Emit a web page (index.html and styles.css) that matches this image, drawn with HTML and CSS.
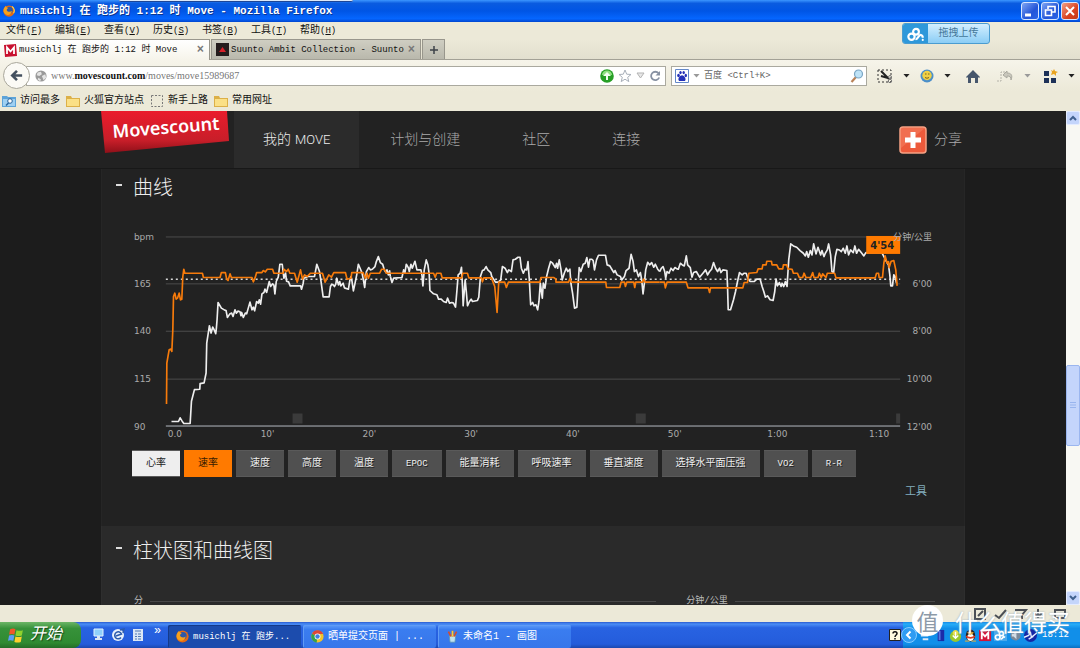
FILE: index.html
```html
<!DOCTYPE html>
<html lang="zh-CN">
<head>
<meta charset="utf-8">
<title>musichlj 在 跑步的 1:12 时 Move</title>
<link rel="stylesheet" href="styles.css">
</head>
<body>
<div class="desktop">
  <header class="titlebar">
    <svg class="ico12" viewBox="0 0 16 16"><circle cx="8" cy="8" r="7.500" fill="#e66a12"/><circle cx="8.500" cy="7" r="4.600" fill="#2d58a8"/><path d="M1 5c1-2 2-3 3-4 0 2 1 2 3 3-1 1-2 1-2 3 1 2 4 3 7 1-1 4-4 6-7 5C1 12 0 8 1 5z" fill="#f9a11b"/><path d="M12 2c3 2 4 6 2 9" stroke="#ffd24a" stroke-width="1.500" fill="none"/></svg>
    <h1 class="window-title">musichlj 在 跑步的 1:12 时 Move - Mozilla Firefox</h1>
    <div class="window-buttons">
      <button class="wbtn" aria-label="最小化"><svg viewBox="0 0 16 16"><path d="M3 12h6" stroke="#fff" stroke-width="3"/></svg></button>
      <button class="wbtn" aria-label="还原"><svg viewBox="0 0 16 16"><path d="M6 6V3.500h7V9h-3M3.500 7h6v5.500h-6z" fill="none" stroke="#fff" stroke-width="1.600"/></svg></button>
      <button class="wbtn close" aria-label="关闭"><svg viewBox="0 0 16 16"><path d="M4 4l8 8M12 4l-8 8" stroke="#fff" stroke-width="2"/></svg></button>
    </div>
    <i class="docked-edge"></i>
  </header>

  <nav class="menubar">
    <button>文件<span class="lat">(<u>F</u>)</span></button><button>编辑<span class="lat">(<u>E</u>)</span></button><button>查看<span class="lat">(<u>V</u>)</span></button><button>历史<span class="lat">(<u>S</u>)</span></button><button>书签<span class="lat">(<u>B</u>)</span></button><button>工具<span class="lat">(<u>T</u>)</span></button><button>帮助<span class="lat">(<u>H</u>)</span></button>
    <button class="upload"><span class="upload-logo"><svg viewBox="0 0 20 16"><g fill="none" stroke="#fff" stroke-width="2.400"><circle cx="5" cy="10.500" r="3.500"/><circle cx="10" cy="5" r="3.200"/><path d="M9.500 13c3 1 3-5 6-4.500 1.500.3 2 1.500 2 3"/></g><circle cx="17.500" cy="14" r="1.200" fill="#fff"/></svg></span><span class="upload-text">拖拽上传</span></button>
  </nav>

  <div class="tabs">
    <button class="tab active"><svg class="ico13" viewBox="0 0 13 13"><path fill="#c8102e" d="M0 1l12-1 1 12-12 1z"/><path d="M3 10V3.500l3.500 4 3.500-4V10" fill="none" stroke="#fff" stroke-width="1.800"/></svg><span>musichlj 在 跑步的 1:12 时 Move</span><b>×</b></button>
    <button class="tab"><svg class="ico13" viewBox="0 0 13 13"><path fill="#241c1c" d="M0 0h13v13H0z"/><path fill="#d8202a" d="M6.500 4L10 9H3z"/></svg><span>Suunto Ambit Collection - Suunto</span><b>×</b></button>
    <button class="tab new" aria-label="新标签页"><svg viewBox="0 0 10 10"><path d="M5 1v8M1 5h8" stroke="#3d4148" stroke-width="1.500"/></svg></button>
  </div>

  <div class="toolbar">
    <button class="back" aria-label="后退"><svg viewBox="0 0 16 16"><path d="M14 8H4M8.500 3L3.500 8l5 5" fill="none" stroke="#44505f" stroke-width="2.800"/></svg></button>
    <div class="urlbar">
      <svg class="ico12" viewBox="0 0 14 14"><circle cx="7" cy="7" r="6.500" fill="#9a9a9a"/><path d="M3 3l4-1 1 3-3 2-3-1zM8 7l4-2 1 4-3 3zM4 9l3 2-1 2-3-2z" fill="#e4e4e4"/></svg>
      <a class="url" href="#">www.<strong>movescount.com</strong>/moves/move15989687</a>
      <svg class="ico14" viewBox="0 0 14 14"><circle cx="7" cy="7" r="6.800" fill="#279f26"/><path d="M2 6a5 4.500 0 0 1 10 0z" fill="#8fe080"/><path d="M7 3l4 4H8v4H6V7H3z" fill="#f2fff0"/></svg>
      <svg class="ico14" viewBox="0 0 14 14"><path d="M7 1l1.700 4.200 4.300.3-3.300 2.800 1.100 4.300L7 10.200l-3.800 2.400 1.100-4.300L1 5.500l4.300-.3z" fill="#fff" stroke="#a9b0ba"/></svg>
      <svg class="ico9" viewBox="0 0 9 9"><path d="M1 2h7L4.500 7z" fill="#e8e8e8" stroke="#b3b3b3"/></svg>
      <svg class="ico12" viewBox="0 0 12 12"><path d="M9.500 3.200a4.200 4.200 0 1 0 .7 4.300" fill="none" stroke="#8791a2" stroke-width="1.800"/><path d="M11 1v4.500H6.500z" fill="#8791a2"/></svg>
    </div>
    <div class="search">
      <svg class="ico14" viewBox="0 0 14 14"><path fill="#fff" stroke="#6488c8" d="M.5.5h13v13H.5z"/><g fill="#2430b8"><ellipse cx="3.500" cy="6.500" rx="1.300" ry="1.700"/><ellipse cx="5.500" cy="3.600" rx="1.200" ry="1.600"/><ellipse cx="8.700" cy="3.600" rx="1.200" ry="1.600"/><ellipse cx="10.800" cy="6.500" rx="1.200" ry="1.700"/><path d="M7 6.200c2 0 4 3 3.500 4.700-.5 1.600-2 1.100-3.500 1-1.500.1-3 .6-3.500-1C3 9.200 5 6.200 7 6.200z"/></g></svg>
      <i class="caret grey"></i>
      <input aria-label="搜索" placeholder="百度 &lt;Ctrl+K&gt;">
      <svg class="ico14" viewBox="0 0 14 14"><path d="M6 8l-4.500 5" stroke="#b98258" stroke-width="2.200"/><circle cx="8.500" cy="5" r="4" fill="#bfe3f7" stroke="#7ba6c4" stroke-width="1.200"/></svg>
    </div>
    <div class="tools">
      <svg class="ico16" viewBox="0 0 16 14"><path d="M1 1h13v12H1z" fill="none" stroke="#333" stroke-dasharray="2 2"/><path d="M4 2l8 8M4 7l7 2" stroke="#222" stroke-width="2"/><circle cx="13" cy="12" r="1.700" fill="none" stroke="#777"/><circle cx="13" cy="8" r="1.500" fill="none" stroke="#777"/></svg>
      <i class="caret"></i>
      <svg class="ico14" viewBox="0 0 14 14"><circle cx="7" cy="7" r="6.500" fill="#4b8fca"/><circle cx="7" cy="6.500" r="4.700" fill="#efd046"/><path d="M5 5h1.500M8 5h1.500M5 8.500q2 1.500 4 0" stroke="#81601a" fill="none"/></svg>
      <i class="caret"></i>
      <svg class="ico14 home" viewBox="0 0 14 14"><path d="M0 8l7-7 7 7-1 1-1-1v6H9V9H5v5H2V8L1 9z" fill="#46566c"/></svg>
      <svg class="ico18" viewBox="0 0 18 12"><path d="M1 11h4V2h4" fill="none" stroke="#b4b2a8" stroke-dasharray="2 1"/><path d="M7 5l4-4v2c4 0 6 2 4 7 0-3-1-4-4-4v2z" fill="#c9c7bc" stroke="#aaa99f"/></svg>
      <i class="caret grey"></i>
      <svg class="ico14 grid" viewBox="0 0 14 14"><path d="M0 2h5v5H0zM0 9h5v5H0zM7 9h5v5H7z" fill="#1d3158"/><path d="M10 0l1 2 3 1-2 1 0 3-2-2-3 1 1-3-1-2 2 1z" fill="#e9a420"/></svg>
      <i class="caret"></i>
    </div>
  </div>

  <div class="bookmarks">
    <a href="#"><svg class="ico14" viewBox="0 0 14 12"><path d="M0 1h5l1 1h8v10H0z" fill="#5da3d8"/><path d="M1 4h12v7H1z" fill="#9fd0f2"/><circle cx="8" cy="6" r="2.300" fill="#fff" stroke="#28649c"/><path d="M6.500 8L4 10.500" stroke="#28649c" stroke-width="1.500"/></svg>访问最多</a>
    <a href="#"><svg class="ico14" viewBox="0 0 14 12"><path d="M0 1h5l1 2h8v9H0z" fill="#dcb048"/><path d="M1 4h12v7H1z" fill="#fbe086"/></svg>火狐官方站点</a>
    <a href="#"><svg class="ico14" viewBox="0 0 14 12"><path d="M1.500.5h11v11h-11z" fill="none" stroke="#777" stroke-dasharray="2 1.500"/></svg>新手上路</a>
    <a href="#"><svg class="ico14" viewBox="0 0 14 12"><path d="M0 1h5l1 2h8v9H0z" fill="#dcb048"/><path d="M1 4h12v7H1z" fill="#fbe086"/></svg>常用网址</a>
  </div>

  <div class="viewport">
    <main class="page">
      <div class="site-head">
        <div class="wrap nav">
          <svg class="logo" viewBox="0 0 128 42"><defs><linearGradient id="red" x2="0" y2="1"><stop offset="0" stop-color="#ea1c2c"/><stop offset=".7" stop-color="#c81e29"/><stop offset="1" stop-color="#8f1019"/></linearGradient></defs><path d="M0 0h126l2 30L4 42z" fill="url(#red)"/><text class="logo-text" x="12" y="27" transform="rotate(-4.500 12 27)">Movescount</text></svg>
          <a class="nav-item on" href="#">我的 <span>MOVE</span></a>
          <a class="nav-item" href="#">计划与创建</a>
          <a class="nav-item" href="#">社区</a>
          <a class="nav-item" href="#">连接</a>
          <a class="share" href="#"><svg viewBox="0 0 28 28"><rect x="1" y="1" width="26" height="26" rx="3" fill="#ed5a3b" stroke="#f6a184" stroke-width="1.500"/><path d="M2 2h24L2 22z" fill="#f47d5f" opacity=".6"/><path d="M14 6v16M6 14h16" stroke="#fff" stroke-width="5"/></svg>分享</a>
        </div>
      </div>
      <section class="wrap panel curves">
        <h2>曲线</h2>
        <svg class="chart" viewBox="101 222 864 222">
          <g class="gridline"><path d="M165 237h736M165 284h736M165 331.500h736M165 379.500h736"/></g>
          <g class="marks"><path d="M292 414h10v10h-10zM636 414h10v10h-10zM897 414h4v10h-4z"/></g>
          <path class="average" d="M165 279.500h736"/>
          <path class="axis" d="M165 426.500h736"/>
          <g class="heart">
            <polyline transform="translate(120 220) scale(.3333)" points="152,606 173,606 178,595 184,605 189,612 208,612 212,545 221,510 237,509 238,492 250,490 256,460 258,370 266,318 271,340 276,322 280,330 285,342 287,325 289,300 292,248 302,265 312,271 316,272 320,293 327,283 333,280 337,290 343,270 347,280 352,274 358,276 361,288 363,278 368,293 374,280 378,282 382,268 388,247 394,270 398,262 402,273 408,245 413,250 416,240 420,253 424,222 430,218 433,208 438,218 446,185 450,200 456,192 460,196 463,222 467,185 473,172 478,133 485,133 490,175 495,160 498,184 504,186 509,198 540,198 543,208 548,190 550,175 562,170 582,170 584,160 589,133 597,155 601,180 608,231 626,231 630,200 634,193 638,195 642,200 646,193 649,175 654,195 658,185 661,198 668,190 672,204 684,208 689,178 692,170 695,185 699,213 704,190 709,165 714,133 722,152 725,160 729,180 733,203 738,155 745,143 750,150 756,148 764,140 768,125 774,110 780,128 787,133 792,150 797,158 800,150 804,165 808,153 810,170"/>
            <polyline transform="translate(390 220) scale(.3333)" points="0,170 5,188 10,175 35,173 40,150 44,158 48,133 54,143 57,155 62,133 66,145 74,124 80,150 92,150 95,165 98,198 102,150 108,120 113,135 117,165 119,212 130,222 140,225 145,238 153,238 160,245 168,248 172,235 178,250 185,248 190,250 196,262 200,215 204,165 210,160 214,142 217,200 219,258 225,180 228,210 232,258 238,245 243,238 247,245 262,242 266,232 271,170 277,152 282,150 288,140 293,150 302,158 305,170 312,180 316,187 325,187 332,180 337,140 345,145 352,158 356,150 360,152 364,155 369,120 376,118 384,112 390,112 394,145 400,160 405,148 410,150 414,125 418,180 422,255 428,248 432,258 438,255 443,270 447,245 451,190 457,235 460,190 465,205 470,170 476,145 482,125 488,130 496,143 500,130 503,145 508,120 513,148 517,180 523,160 529,145 534,155 540,148 543,190 548,220 554,265 561,262 565,190 568,143 573,155 580,133 586,130 591,113 596,142 600,118 606,118 610,122 614,150 620,120 626,106 647,106 652,135 660,138 666,148 672,158 676,152 682,165 692,170 696,180 704,170 709,152 718,145 724,103 730,125 734,155 740,150 746,170 752,158 756,180 760,222 764,190 768,150 774,127 780,135 786,128 792,142 797,133 804,148 810,155"/>
            <polyline transform="translate(660 220) scale(.3333)" points="0,155 5,145 10,140 15,155 18,175 22,155 28,160 34,145 40,152 46,143 52,147 56,148 62,130 68,135 74,138 80,108 84,135 92,143 97,172 102,158 110,155 120,172 130,160 138,150 144,165 150,155 156,148 162,128 168,145 174,155 180,145 184,158 190,150 202,152 204,200 206,270 213,270 222,240 228,215 234,185 240,158 248,165 254,160 260,160 265,175 272,185 284,185 292,178 302,178 308,200 313,215 318,232 324,228 332,240 341,242 346,215 350,178 354,198 360,188 365,200 368,190 373,200 378,185 383,200 388,120 394,72 402,78 412,82 422,92 432,100 438,108 442,95 447,112 453,92 458,105 463,72 470,102 476,82 484,105 488,92 494,110 498,100 504,90 508,72 514,105 518,155 523,158 528,110 533,88 540,90 546,95 552,85 558,100 563,78 568,105 574,90 582,98 587,78 592,100 598,88 606,98 614,108 620,98 668,98 682,125 688,135 692,165 695,198 700,198 704,165 708,170 712,190"/>
          </g>
          <g class="pace">
            <polyline transform="translate(120 220) scale(.3333)" points="137,553 138,430 145,390 150,388 153,395 156,330 158,230 162,220 166,238 170,235 175,220 179,240 183,238 186,170 189,148 192,160 245,160 248,173 298,173 302,158 314,158 318,178 322,182 328,162 332,173 394,173 398,186 404,172 408,158 424,158 428,152 434,156 440,148 456,148 460,160 488,160 490,148 498,155 503,148 508,160 522,160 530,187 540,150 546,178 552,165 560,170 570,160 606,160 614,187 625,165 633,172 640,158 675,158 680,178 692,175 694,158 728,158 735,175 740,160 744,175 750,160 778,160 784,148 792,148 798,160 810,160"/>
            <polyline transform="translate(390 220) scale(.3333)" points="0,160 130,160 135,172 139,160 152,160 156,174 215,174 218,160 232,160 236,174 274,174 277,186 281,174 304,174 309,187 314,200 321,278 326,187 344,187 349,203 355,187 450,187 453,173 492,173 498,178 498,187 536,187 540,176 544,187 648,187 650,203 690,203 694,187 704,187 707,200 711,187 732,187 735,203 738,187 758,187 762,178 766,187 810,187"/>
            <polyline transform="translate(660 220) scale(.3333)" points="0,187 14,187 17,204 22,187 80,187 85,204 146,204 150,218 153,204 250,204 254,188 264,188 268,160 292,158 296,147 308,147 310,135 320,135 322,124 336,124 338,135 352,135 358,147 370,147 372,135 382,135 386,147 398,148 402,160 414,160 420,173 430,173 434,160 440,173 454,173 460,158 464,173 476,173 480,160 486,173 490,162 500,173 504,160 526,160 530,174 648,174 652,160 658,160 660,173 670,173 674,130 678,108 684,130 688,125 690,143 696,124 704,122 710,150 714,198"/>
          </g>
          <rect x="867" y="236" width="34" height="18" fill="#ff7a00"/>
          <text class="tip" x="883" y="249">4'54</text>
          <g class="labels">
            <text x="133" y="240">bpm</text><text x="133" y="287">165</text><text x="133" y="334">140</text><text x="133" y="382">115</text><text x="133" y="430">90</text>
            <g text-anchor="end"><text x="933" y="240">分钟/公里</text><text x="933" y="287">6'00</text><text x="933" y="334">8'00</text><text x="933" y="382">10'00</text><text x="933" y="430">12'00</text></g>
            <g text-anchor="middle"><text x="174" y="438">0.0</text><text x="267" y="438">10'</text><text x="369" y="438">20'</text><text x="471" y="438">30'</text><text x="573" y="438">40'</text><text x="675" y="438">50'</text><text x="778" y="438">1:00</text><text x="880" y="438">1:10</text></g>
          </g>
        </svg>
        <div class="series">
          <button class="white">心率</button><button class="orange">速率</button><button>速度</button><button>高度</button><button>温度</button><button class="lat">EPOC</button><button>能量消耗</button><button>呼吸速率</button><button>垂直速度</button><button>选择水平面压强</button><button class="lat">VO2</button><button class="lat">R-R</button>
        </div>
        <a class="tool-link" href="#">工具</a>
      </section>
      <section class="wrap panel bars">
        <h2>柱状图和曲线图</h2>
        <div class="two-charts"><div class="rule">分</div><div class="rule">分钟/公里</div></div>
      </section>
    </main>
    <div class="scrollbar">
      <button aria-label="向上滚动"><svg viewBox="0 0 8 8"><path d="M1 6l3-3 3 3" fill="none" stroke="#40618f" stroke-width="2"/></svg></button>
      <div class="track"><div class="thumb"><svg viewBox="0 0 6 8"><path d="M0 .5h6M0 3h6M0 5.500h6" stroke="#98b5ee"/></svg></div></div>
      <button aria-label="向下滚动"><svg viewBox="0 0 8 8"><path d="M1 2l3 3 3-3" fill="none" stroke="#40618f" stroke-width="2"/></svg></button>
    </div>
  </div>

  <div class="addonbar">
    <svg viewBox="0 0 96 12"><g fill="none" stroke="#4b4f55" stroke-width="2"><path d="M2 1h10v10H2zM5 8l5-5M22 7l4 3 7-8M42 2h11l-4 5v4M65 1v7M61 5l4 4 4-4M82 2h10v8H82z"/></g></svg>
  </div>

  <footer class="taskbar">
    <button class="start"><svg viewBox="0 0 16 16"><path d="M2 2q3-1 5 0L6 7Q4 6 1 7z" fill="#f0562a"/><path d="M8 3q3 1 6 0l-1 5q-3 1-6 0z" fill="#8fd22e"/><path d="M1 8q3-1 5 0l-1 5q-3-1-5 0z" fill="#5c9df5"/><path d="M7 9q3 1 6 0l-1 5q-3 1-6 0z" fill="#ffd02e"/></svg>开始</button>
    <div class="quick">
      <svg viewBox="0 0 14 14"><path d="M3 1h9v7H3z" fill="#8fd0fb" stroke="#e2f2ff"/><path d="M6 8h3v2h2v2H4v-2h2z" fill="#dce6f2"/></svg>
      <svg viewBox="0 0 14 14"><circle cx="7" cy="7" r="6" fill="#e8f1fb"/><path d="M10 9.500A3.500 3.500 0 1 1 10.500 6L5 8M9 2l4-1-1 4" fill="none" stroke="#2c5cad" stroke-width="1.500"/></svg>
      <svg viewBox="0 0 14 14"><path d="M2 1h10v12H2z" fill="#dbe7f5"/><path d="M4 3h6M4 6h2m1 0h3M4 8.500h2m1 0h3M4 11h2m1 0h3" stroke="#4f79b5"/></svg>
      <span>»</span>
    </div>
    <div class="tasks">
      <button class="task current"><svg viewBox="0 0 16 16"><circle cx="8" cy="8" r="7.500" fill="#e66a12"/><circle cx="8.500" cy="7" r="4.600" fill="#2d58a8"/><path d="M1 5c1-2 2-3 3-4 0 2 1 2 3 3-1 1-2 1-2 3 1 2 4 3 7 1-1 4-4 6-7 5C1 12 0 8 1 5z" fill="#f9a11b"/></svg><span>musichlj 在 跑步...</span></button>
      <button class="task"><svg viewBox="0 0 16 16"><circle cx="8" cy="8" r="7.500" fill="#f0c32c"/><path d="M8 8L1.300 4.500A7.500 7.500 0 0 1 15 5H8z" fill="#dd4638"/><path d="M8 8l-1 7.500A7.500 7.500 0 0 1 1.300 4.500z" fill="#35a24c"/><circle cx="8" cy="8" r="3.600" fill="#fff"/><circle cx="8" cy="8" r="2.700" fill="#3f7fe0"/></svg><span>晒单提交页面 | ...</span></button>
      <button class="task"><svg viewBox="0 0 16 16"><path d="M4 7h8l-1 8H5z" fill="#bfe2f0" stroke="#5691b5"/><path d="M6 8L3 2M8 8V1M10 8l3-6" stroke="#d84b2b" stroke-width="2"/><path d="M8 8V1" stroke="#f6cf36" stroke-width="2"/></svg><span>未命名1 - 画图</span></button>
    </div>
    <svg class="lang" viewBox="0 0 12 12"><path d="M.5.5h11v11H.5z" fill="#fffbe0" stroke="#222"/><path d="M4 4.500C4 2 8 2 8 4.500 8 6 6 6 6 8M6 9v1.500" fill="none" stroke="#111" stroke-width="1.500"/></svg>
    <div class="tray">
      <svg class="expand" viewBox="0 0 16 16"><circle cx="8" cy="8" r="7.500" fill="#2f9cf2" stroke="#86ccff"/><path d="M9.500 4.500L6 8l3.500 3.500" fill="none" stroke="#fff" stroke-width="2"/></svg>
      <svg viewBox="0 0 14 14"><path d="M2 2h8v6H2zM4 10h6v2H4z" fill="#dbe9f7"/></svg>
      <svg viewBox="0 0 14 14"><path d="M4 1h7v12H4z" fill="#1b2ba8"/><path d="M5 2h2v10H5z" fill="#5a78e0"/></svg>
      <svg viewBox="0 0 14 14"><circle cx="7" cy="8" r="6" fill="#9ac82c"/><circle cx="7" cy="4" r="3" fill="#e5dc4b"/><path d="M7 3v7M4 7l3 3 3-3" stroke="#fff" stroke-width="1.500" fill="none"/></svg>
      <svg viewBox="0 0 14 14"><ellipse cx="7" cy="7" rx="5" ry="6.500" fill="#28211e"/><ellipse cx="7" cy="9" rx="3.500" ry="4" fill="#fff"/><path d="M2 7q5 3 10 0v2q-5 3-10 0z" fill="#dc3a22"/><path d="M4 4h6L7 6zM1 13h5M8 13h5" fill="#f4b22e" stroke="#f4b22e"/></svg>
      <svg viewBox="0 0 14 14"><path d="M0 1h13v12H0z" fill="#d31538"/><path d="M3 11V4l3.500 4L10 4v7" fill="none" stroke="#fff" stroke-width="2"/></svg>
      <svg viewBox="0 0 14 14"><path d="M0 1h14v12H0z" fill="#4ba9ea"/><g fill="none" stroke="#fff" stroke-width="1.800"><circle cx="4" cy="9" r="2.500"/><circle cx="8" cy="5" r="2.200"/><path d="M7 11c3 0 2-4 5-2"/></g></svg>
      <svg viewBox="0 0 14 14"><circle cx="7" cy="7" r="5.500" fill="#7b899a"/><path d="M3 5h2l3-3v9L5 8H3z" fill="#d5dde6"/></svg>
      <svg viewBox="0 0 14 14"><circle cx="7" cy="7" r="7" fill="#1427a6"/><path d="M0 9l5-2 2-3 1 5 6-5M5 11l5-3" stroke="#e6efff" stroke-width="1.500" fill="none"/></svg>
      <time>18:12</time>
    </div>
  </footer>
  <div class="watermark"><span class="seal">值</span><span>什么值得买</span></div>
</div>
</body>
</html>
```
FILE: styles.css
```css
* { box-sizing: border-box; }
body { margin: 0; font-family: "Liberation Mono", "Noto Sans CJK SC", monospace; font-size: 10px; line-height: 14px; color: #111; }
button, input { font: inherit; color: inherit; border: 0; padding: 0; background: none; }
a { color: inherit; text-decoration: none; }
svg { display: block; flex: none; }
.desktop { position: relative; height: 100vh; display: flex; flex-direction: column; overflow: hidden; background: #ece9d8; }
.lat { font-size: 9px; }
.ico9 { width: 9px; height: 9px; }
.ico12 { width: 12px; height: 12px; }
.ico13 { width: 13px; height: 13px; }
.ico14 { width: 14px; height: 14px; }
.ico16 { width: 16px; height: 14px; }
.ico18 { width: 18px; height: 12px; }

.titlebar { position: relative; flex: none; height: 22px; display: flex; align-items: center; gap: 5px; padding: 0 1px 0 3px; background: linear-gradient(#3c96ff 0, #0a5be0 15%, #0055e5 50%, #0566ff 85%, #0046cf); }
.window-title { flex: 1; margin: 0; font-size: 11px; line-height: 20px; font-weight: 700; color: #fff; text-shadow: 1px 1px #0a3590; white-space: nowrap; }
.window-buttons { display: flex; gap: 2px; }
.wbtn { width: 18px; height: 18px; border: 1px solid #d8e6ff; border-radius: 3px; background: linear-gradient(135deg, #7fa5f3, #2355d8 60%, #2c66e8); }
.wbtn.close { background: linear-gradient(135deg, #f0a088, #da4321 60%, #c43a17); }
.docked-edge { position: absolute; left: 119px; top: 0; width: 234px; height: 2px; border-radius: 0 0 3px 3px; background: #dce8f8; border-bottom: 1px solid #1c4698; }

.menubar { position: relative; flex: none; display: flex; height: 17px; padding-left: 6px; }
.menubar > button { width: 49px; text-align: left; white-space: nowrap; line-height: 15px; }
.menubar .upload { position: absolute; right: 90px; top: 1px; z-index: 2; width: 88px; height: 21px; display: flex; border: 1px solid #4a9cd0; border-radius: 3px; overflow: hidden; background: linear-gradient(#d3efff, #8bcdf5); }
.upload-logo { width: 25px; height: 20px; background: #2e98da; display: grid; place-items: center; }
.upload-logo svg { width: 18px; height: 15px; }
.upload-text { flex: 1; text-align: center; line-height: 20px; color: #447799; }

.tabs { flex: none; height: 21px; display: flex; align-items: stretch; gap: 1px; border-bottom: 1px solid #a3a196; background: linear-gradient(#ece9d8, #e2dfcf); }
.tab { width: 210px; display: flex; align-items: center; gap: 2px; padding: 0 5px 0 4px; font-size: 9px; border: 1px solid #98968c; border-bottom: 0; background: linear-gradient(#cfcec2, #b9b8ac); white-space: nowrap; }
.tab span { flex: 1; text-align: left; overflow: hidden; }
.tab b { font-size: 12px; color: #777; }
.tab.active { background: linear-gradient(#fff, #f6f4ea); margin-bottom: -1px; border-left: 0; }
.tab.new { width: 23px; padding: 0; justify-content: center; }
.tab.new svg { width: 10px; height: 10px; }

.toolbar { flex: none; height: 31px; display: flex; align-items: center; padding: 0 5px 0 3px; background: linear-gradient(#f6f4ea, #ece9d8); }
.back { position: relative; z-index: 1; width: 27px; height: 27px; border: 1px solid #a9a79b; border-radius: 50%; background: #fbfaf5; display: grid; place-items: center; }
.back svg { width: 15px; height: 15px; }
.urlbar { flex: 1; height: 20px; margin-left: -4px; padding: 0 4px 0 8px; display: flex; align-items: center; gap: 4px; border: 1px solid #aaa99f; background: #fff; }
.url { flex: 1; font-family: "Liberation Serif", serif; font-size: 10px; color: #777; }
.url strong { color: #111; }
.search { width: 196px; height: 20px; margin-left: 5px; padding: 0 2px 0 3px; display: flex; align-items: center; gap: 4px; border: 1px solid #aaa99f; background: #fff; }
.search input { flex: 1; min-width: 0; outline: 0; font-size: 9px; }
.search input::placeholder { color: #666; opacity: 1; }
.caret { width: 7px; height: 4px; background: #222; clip-path: polygon(0 0, 100% 0, 50% 100%); flex: none; }
.caret.grey { background: #999; }
.tools { display: flex; align-items: center; gap: 10px; margin-left: 10px; }
.tools .home { margin: 0 6px 0 5px; }
.tools .grid { margin-left: 3px; }

.bookmarks { flex: none; height: 20px; padding-left: 2px; display: flex; align-items: center; gap: 6px; }
.bookmarks a { display: flex; align-items: center; gap: 4px; }

.viewport { flex: 1; min-height: 0; display: flex; }
.page { flex: 1; min-width: 0; overflow: hidden; display: flex; flex-direction: column; background: #1c1c1c; color: #ddd; }
.wrap { width: 100%; max-width: 864px; margin: 0 auto; }
.site-head { flex: none; background: #222; border-bottom: 1px solid #181818; }
.nav { height: 57px; display: flex; align-items: stretch; }
.logo { width: 128px; height: 42px; margin-right: 5px; overflow: visible; }
.logo-text { font: 600 18px "Noto Sans", sans-serif; fill: #fff; }
.nav-item { display: flex; align-items: center; gap: 4px; padding: 0 31px; font-size: 14px; font-weight: 300; color: #aaa; }
.nav-item.on { padding: 0 29px; background: #2b2b2b; color: #eee; }
.nav-item.on span { font-family: Roboto, sans-serif; font-size: 13px; }
.share { margin-left: auto; padding-right: 3px; display: flex; align-items: center; gap: 7px; font-size: 14px; font-weight: 300; color: #aaa; }
.share svg { width: 28px; height: 28px; }
.panel { flex: none; background: #222; border: solid #262626; border-width: 0 1px; }
.panel h2 { margin: 0; padding: 8px 0 7px 14px; display: flex; gap: 11px; font-size: 20px; line-height: 26px; font-weight: 300; color: #eee; }
.panel h2::before { content: ""; width: 6px; height: 2px; margin-top: 7px; background: #ddd; }
.chart { width: 100%; margin-top: 12px; }
.gridline { stroke: #4c4c4c; stroke-width: 1; fill: none; }
.axis { stroke: #b5bac2; stroke-width: 1; }
.average { stroke: #d8d8d8; stroke-width: 1.5; stroke-dasharray: 2 3; }
.marks { fill: #3b3b3b; }
.heart, .pace { fill: none; stroke-width: 5; stroke-linejoin: round; }
.heart { stroke: #eee; }
.pace { stroke: #f77b0b; }
.tip { font: 700 10px "DejaVu Sans", sans-serif; fill: #222; text-anchor: middle; }
.labels { font: 9px "DejaVu Sans", "Noto Sans CJK SC", sans-serif; fill: #aaa; }
.series { display: flex; flex-wrap: wrap; gap: 4px; padding: 7px 30px 0; }
.series button { height: 27px; padding: 0 14px; background: #505050; border: 1px solid #5a5a5a; border-width: 1px 0; color: #eee; text-shadow: 1px 1px #222; white-space: nowrap; }
.series .white { background: #eee; color: #222; text-shadow: none; }
.series .orange { background: #ff7a00; border-color: #ff7a00; color: #3a1c00; text-shadow: none; }
.tool-link { display: block; padding: 8px 37px 27px 0; text-align: right; font-size: 11px; color: #82aebf; }
.panel.bars { flex: 1; background: #2a2a2a; border-color: #2e2e2e; }
.bars h2 { padding-top: 14px; }
.two-charts { display: flex; gap: 30px; padding: 21px 29px 0 32px; }
.rule { flex: 21; display: flex; align-items: center; gap: 7px; font-size: 9px; color: #bbb; }
.rule:last-child { flex: 10; }
.rule::after { content: ""; flex: 1; border-top: 1px solid #484848; }

.scrollbar { width: 14px; display: flex; flex-direction: column; background: #f8f8f3; }
.scrollbar button { height: 14px; display: grid; place-items: center; background: #c4d5fb; border: 1px solid #e4ecff; border-radius: 2px; }
.scrollbar button svg { width: 8px; height: 8px; }
.track { flex: 1; padding-top: 240px; }
.thumb { height: 81px; border: 1px solid #9bb6ef; border-radius: 2px; background: #c4d5fb; display: grid; place-items: center; }
.thumb svg { width: 6px; height: 8px; }

.addonbar { flex: none; height: 17px; padding-right: 11px; display: flex; align-items: center; justify-content: flex-end; }
.addonbar svg { width: 96px; height: 12px; }
.taskbar { flex: none; height: 26px; display: flex; align-items: stretch; color: #fff; background: linear-gradient(#2a5bd0 0, #4a8df5 8%, #2863e2 22%, #245cdb 85%, #1c48ae); }
.start { width: 81px; display: flex; align-items: center; gap: 5px; padding-left: 8px; font-size: 16px; font-style: italic; border-radius: 0 8px 8px 0; background: linear-gradient(#6cb566, #37923a 25%, #2f8a31 80%, #256d27); text-shadow: 1px 1px 1px #174618; }
.start svg { width: 17px; height: 17px; }
.quick { width: 87px; display: flex; align-items: center; gap: 6px; padding-left: 10px; }
.quick svg { width: 14px; height: 14px; }
.quick span { font-size: 12px; padding: 0 0 8px 3px; }
.tasks { flex: 1; display: flex; gap: 2px; padding-top: 3px; }
.task { width: 133px; display: flex; align-items: center; gap: 4px; padding-left: 8px; border-radius: 2px; background: linear-gradient(#5d9bf9, #3a7df0 20%, #3776ea); white-space: nowrap; box-shadow: inset 1px 1px #5f9bf5; }
.task.current { background: #1c4cad; box-shadow: inset 1px 1px #153a8a; font-size: 9px; }
.task svg { width: 13px; height: 13px; }
.lang { width: 12px; height: 12px; align-self: center; margin-right: 2px; }
.tray { display: flex; align-items: center; gap: 2px; padding-right: 11px; background: linear-gradient(#1789e6 0, #27adf8 8%, #118fe9 25%, #118fe9 85%, #0b6fc0); }
.tray svg { width: 13px; height: 13px; }
.tray .expand { width: 16px; height: 16px; margin-left: -2px; }
.tray time { font-size: 9px; line-height: 10px; padding-left: 3px; }
.watermark { position: absolute; right: 10px; bottom: 12px; display: flex; align-items: center; gap: 12px; font-size: 23px; line-height: 24px; color: #fff; font-family: "Noto Sans CJK SC", sans-serif; text-shadow: 0 0 2px #8ea4b8; }
.seal { width: 31px; height: 31px; border-radius: 50%; background: #fff; color: #8d9aa8; text-align: center; line-height: 30px; font-size: 22px; text-shadow: none; }
```
